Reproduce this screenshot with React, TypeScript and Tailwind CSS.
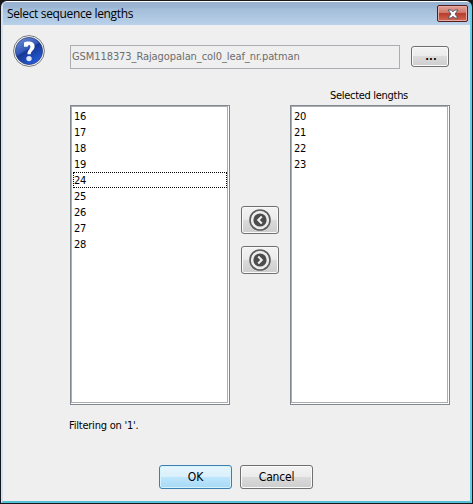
import React from "react";

const uiFont = "font-['DejaVu_Sans_Condensed','DejaVu_Sans',sans-serif] [font-stretch:condensed]";

function LengthList({ items, focused }: { items: number[]; focused?: number }) {
  return (
    <div className="h-[300px] w-[160px] border border-[#828790] bg-white pr-px pb-px">
      <ul className="h-full border border-[#abadb3] pt-px pl-px text-[11px] leading-[18px] tracking-[-0.3px]">
        {items.map((n) => (
          <li
            key={n}
            className={
              n === focused
                ? "h-4 border border-dotted border-black leading-[16px]"
                : "h-4 pl-px"
            }
          >
            {n}
          </li>
        ))}
      </ul>
    </div>
  );
}

const grey =
  "border-[#707070] bg-[linear-gradient(#f3f3f3_0%,#ebebeb_48%,#dbdbdb_50%,#cdcdcd_100%)] shadow-[inset_0_0_0_1px_#fafafa]";

function MoveButton({ path }: { path: string }) {
  return (
    <button className={`flex h-7 w-[38px] items-center justify-center rounded-[3px] border ${grey}`}>
      <svg width="22" height="22" viewBox="0 0 22 22">
        <circle cx="11" cy="11" r="10" fill="#ededed" stroke="#5a5a5a" strokeWidth="1.6" />
        <circle cx="11" cy="11" r="6.6" fill="#4c4c4c" />
        <path d={path} fill="none" stroke="#f2f2f2" strokeWidth="2.1" />
      </svg>
    </button>
  );
}

export default function App() {
  return (
    <div className={`flex h-[504px] w-[473px] overflow-hidden bg-[#17171b] p-px text-black ${uiFont}`}>
      <div className="flex w-full flex-col rounded-t-[6px] border-t border-r-2 border-b-2 border-l-2 border-t-white border-r-[#63cdeb] border-b-[#55bfd3] border-l-[#d3e2f2] bg-[#efefef]">
        <header className="flex h-[23px] shrink-0 justify-between rounded-t-[4px] bg-[linear-gradient(#98b1d0_0%,#9ab4d3_22%,#a3bdd9_30%,#b9d1ea_100%)] pr-[2px] pl-1">
          <h1 className="font-['Open_Sans','Noto_Sans',sans-serif] text-[12px] leading-[24px] tracking-[-0.35px] [font-stretch:normal]">
            Select sequence lengths
          </h1>
          <button className="mt-[3px] flex h-[17px] w-[31px] items-center justify-center rounded-[2px] border border-[#551d20] bg-[linear-gradient(#e0a298_0%,#cf7468_47%,#b83d2b_50%,#cf6752_100%)] shadow-[inset_0_0_0_1px_#e5aaa1]">
            <svg width="12" height="10" viewBox="0 0 12 10">
              <path d="M1 1h3.2L6 2.8 7.8 1H11L8 5l3 4H7.8L6 7.2 4.2 9H1l3-4z" fill="#fff" stroke="#535666" strokeWidth="1" />
            </svg>
          </button>
        </header>

        <main className="flex flex-1 flex-col">
          <div className="flex items-start pt-[10px] pl-[9px]">
            <svg width="34" height="34" viewBox="0 0 34 34">
              <defs>
                <linearGradient id="ball" x1="0" y1="0" x2="0.6" y2="1">
                  <stop offset="0" stopColor="#7595d8" />
                  <stop offset="0.5" stopColor="#3157b8" />
                  <stop offset="0.55" stopColor="#163894" />
                  <stop offset="1" stopColor="#2459d6" />
                </linearGradient>
              </defs>
              <circle cx="17" cy="16" r="15.4" fill="#fafafa" stroke="#73767e" strokeWidth="1" />
              <circle cx="17" cy="16" r="13.6" fill="url(#ball)" stroke="#25366f" strokeWidth="0.7" />
              <path d="M12 7.6C15 5.9 22.6 5.9 22.6 11.4C22.6 15.2 18.9 15.6 18.7 19.2H15.5C15.3 15.2 18.4 14.5 18.4 11.6C18.4 9.4 16.2 9.3 15.6 11.7H12z" fill="#fff" />
              <circle cx="17" cy="23.6" r="2.7" fill="#dfe5f5" />
            </svg>
            <div className="mt-[10px] ml-6 flex h-6 w-[330px] items-center border border-[#abadb3] pl-px text-[11px] whitespace-nowrap text-[#6d6d6d]">
              <span className="pt-px tracking-[-0.08px]">GSM118373_Rajagopalan_col0_leaf_nr.patman</span>
            </div>
            <button className={`mt-[11px] ml-[11px] flex h-[21px] w-[38px] items-center justify-center rounded-[3px] border text-[11px] ${grey}`}>
              <span className="pt-0.5 pl-0.5 font-bold tracking-[0px]">...</span>
            </button>
          </div>

          <div className="mt-[11px] flex pl-[67px]">
            <div className="pt-[25px]">
              <LengthList items={[16, 17, 18, 19, 24, 25, 26, 27, 28]} focused={24} />
            </div>
            <div className="flex w-[60px] flex-col items-center gap-3 pt-[126px]">
              <MoveButton path="M12.8 7.6L9.3 11l3.5 3.4" />
              <MoveButton path="M9.2 7.6l3.5 3.4-3.5 3.4" />
            </div>
            <div>
              <div className="flex h-[25px] w-[160px] justify-center pr-0.5 text-[11px] leading-[32px] tracking-[-0.3px]">
                Selected lengths
              </div>
              <LengthList items={[20, 21, 22, 23]} />
            </div>
          </div>

          <p className="mt-[13px] pl-[66px] text-[11px] leading-4 tracking-[-0.22px]">Filtering on '1'.</p>

          <footer className="mt-[31px] flex gap-2 pl-[156px] text-[12px]">
            <button className="h-6 w-[73px] rounded-[3px] border border-[#3c7fb1] bg-[linear-gradient(#e8f5fc_0%,#d9f0fc_48%,#bee6fd_50%,#a7d9f5_100%)] shadow-[inset_0_0_0_1px_#d5f3fc]">
              OK
            </button>
            <button className={`h-6 w-[73px] rounded-[3px] border tracking-[-0.2px] ${grey}`}>Cancel</button>
          </footer>
        </main>
      </div>
    </div>
  );
}
